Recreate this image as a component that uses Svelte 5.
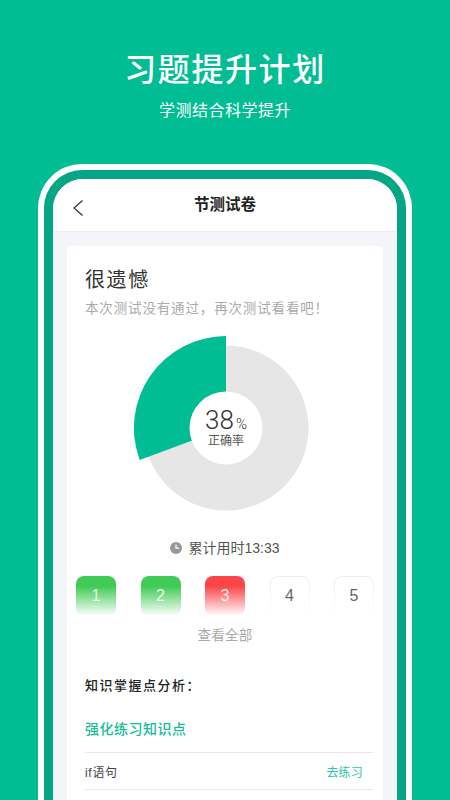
<script>
  const questions = [
    { n: 1, state: 'right' },
    { n: 2, state: 'right' },
    { n: 3, state: 'wrong' },
    { n: 4, state: 'todo' },
    { n: 5, state: 'todo' }
  ];
</script>

<div class="page">
  <header class="hero">
    <h1>习题提升计划</h1>
    <p>学测结合科学提升</p>
  </header>

  <div class="phone">
    <div class="bezel">
      <div class="screen">
        <div class="nav">
          <svg class="back" width="12" height="18" viewBox="0 0 12 18">
            <path d="M10.5 1.5 L2 9 L10.5 16.5" fill="none" stroke="#333" stroke-width="1.2" />
          </svg>
          <span>节测试卷</span>
        </div>
        <div class="content">
          <div class="card">
            <h2>很遗憾</h2>
            <p class="hint">本次测试没有通过，再次测试看看吧！</p>

            <div class="chart">
              <svg width="184" height="184" viewBox="-92 -92 184 184">
                <circle r="82.5" fill="#e6e6e6" />
                <path d="M0 0 L0 -92 A92 92 0 0 0 -86.3 32 Z" fill="#00bd94" />
                <circle r="36.5" fill="#fff" />
              </svg>
              <div class="rate">
                <div class="num">38<small>%</small></div>
                <div class="label">正确率</div>
              </div>
            </div>

            <div class="time">
              <svg width="12" height="12" viewBox="0 0 12 12">
                <circle cx="6" cy="6" r="6" fill="#999" />
                <path d="M6 2.6 V6.2 H9" fill="none" stroke="#fff" stroke-width="1.2" />
              </svg>
              <span>累计用时13:33</span>
            </div>

            <div class="questions">
              {#each questions as q}
                <div class="q {q.state}">{q.n}</div>
              {/each}
            </div>

            <div class="all">查看全部</div>

            <div class="analysis">知识掌握点分析：</div>
            <div class="strong">强化练习知识点</div>
            <div class="row">
              <span>if语句</span>
              <span class="go">去练习</span>
            </div>
          </div>
        </div>
      </div>
    </div>
  </div>
</div>

<style>
  :global(body) {
    margin: 0;
    background: #00bd94;
  }

  .page {
    width: 450px;
    height: 800px;
    overflow: hidden;
    background: #00bd94;
    font-family: "Liberation Sans", "Noto Sans CJK SC", sans-serif;
    color: #333;
  }

  .hero {
    padding-top: 48px;
    height: 164px;
    box-sizing: border-box;
    text-align: center;
    color: #fff;
  }
  .hero h1 {
    margin: 0;
    font-size: 32px;
    line-height: 44px;
    font-weight: 500;
    letter-spacing: 1.6px;
  }
  .hero p {
    margin: 9px 0 0;
    font-size: 16px;
    line-height: 20px;
    letter-spacing: 0.5px;
  }

  .phone {
    margin-left: 38px;
    width: 374px;
    box-sizing: border-box;
    background: #fff;
    padding: 6px 6px 0;
    border-radius: 44px 44px 0 0;
    height: 636px;
  }
  .bezel {
    background: #04a785;
    padding: 9px 9px 0;
    border-radius: 38px 38px 0 0;
    height: 100%;
    box-sizing: border-box;
  }
  .screen {
    background: #f3f5f8;
    border-radius: 30px 30px 0 0;
    height: 100%;
    overflow: hidden;
  }

  .nav {
    position: relative;
    height: 53px;
    background: #fff;
    border-bottom: 1px solid #eceef0;
    box-sizing: border-box;
    display: flex;
    align-items: center;
    justify-content: center;
    font-size: 15.5px;
    font-weight: 700;
    color: #222;
    padding-bottom: 5px;
  }
  .back {
    position: absolute;
    left: 19px;
    top: 20px;
  }

  .content {
    padding: 14px 14px 0;
  }
  .card {
    background: #fff;
    border-radius: 4px;
    padding: 19px 10px 0 18px;
    height: 600px;
    box-sizing: border-box;
  }
  .card h2 {
    margin: 0;
    font-size: 20px;
    line-height: 30px;
    font-weight: 400;
    letter-spacing: 1.6px;
    color: #333;
  }
  .hint {
    margin: 4px 0 0;
    font-size: 13.5px;
    line-height: 20px;
    letter-spacing: 0.85px;
    color: #aaa;
  }

  .chart {
    position: relative;
    width: 184px;
    height: 184px;
    margin: 17px 0 0 49px;
  }
  .chart svg {
    display: block;
  }
  .rate {
    position: absolute;
    left: 0;
    right: 0;
    top: 71px;
    text-align: center;
  }
  .num {
    font-family: Roboto, sans-serif;
    font-size: 26px;
    font-weight: 300;
    line-height: 26px;
    color: #333;
    padding-left: 0;
  }
  .num small {
    font-size: 15px;
    margin-left: 2px;
  }
  .label {
    margin-top: -4px;
    font-size: 12px;
    line-height: 16px;
    color: #555;
  }

  .time {
    display: flex;
    align-items: center;
    justify-content: center;
    gap: 6px;
    margin: 18px 0 0 -18px;
    width: 316px;
    font-size: 14px;
    line-height: 20px;
    color: #555;
  }

  .questions {
    display: flex;
    justify-content: space-between;
    margin: 18px -1px 0 -9px;
  }
  .q {
    width: 40px;
    height: 40px;
    box-sizing: border-box;
    border-radius: 8px;
    display: flex;
    align-items: center;
    justify-content: center;
    font-size: 16px;
    color: rgba(255, 255, 255, 0.85);
  }
  .q.right {
    background: linear-gradient(#3fcb55 0%, #3fcb55 25%, #fff 100%);
  }
  .q.wrong {
    background: linear-gradient(#fb4549 0%, #fb4549 25%, #fff 100%);
  }
  .q.todo {
    color: #666;
    border: 1px solid transparent;
    background: linear-gradient(#fff, #fff) padding-box, linear-gradient(#eee, #fff) border-box;
  }

  .all {
    margin-top: 10px;
    margin-left: -18px;
    width: 316px;
    text-align: center;
    font-size: 13.5px;
    line-height: 20px;
    color: #aaa;
    letter-spacing: 0.3px;
  }

  .analysis {
    margin-top: 30px;
    font-size: 13px;
    line-height: 20px;
    font-weight: 500;
    letter-spacing: 1.5px;
    color: #222;
  }
  .strong {
    margin-top: 23px;
    font-size: 14px;
    line-height: 20px;
    font-weight: 500;
    letter-spacing: 0.5px;
    color: #17bc9a;
  }
  .row {
    margin-top: 13px;
    height: 36px;
    border-top: 1px solid #e8e8e8;
    border-bottom: 1px solid #e8e8e8;
    display: flex;
    align-items: center;
    justify-content: space-between;
    padding-right: 10px;
    font-size: 12px;
    color: #444;
  }
  .row span:first-child {
    letter-spacing: 0.7px;
  }
  .go {
    color: #2cc5a6;
    letter-spacing: 0.2px;
  }
</style>
